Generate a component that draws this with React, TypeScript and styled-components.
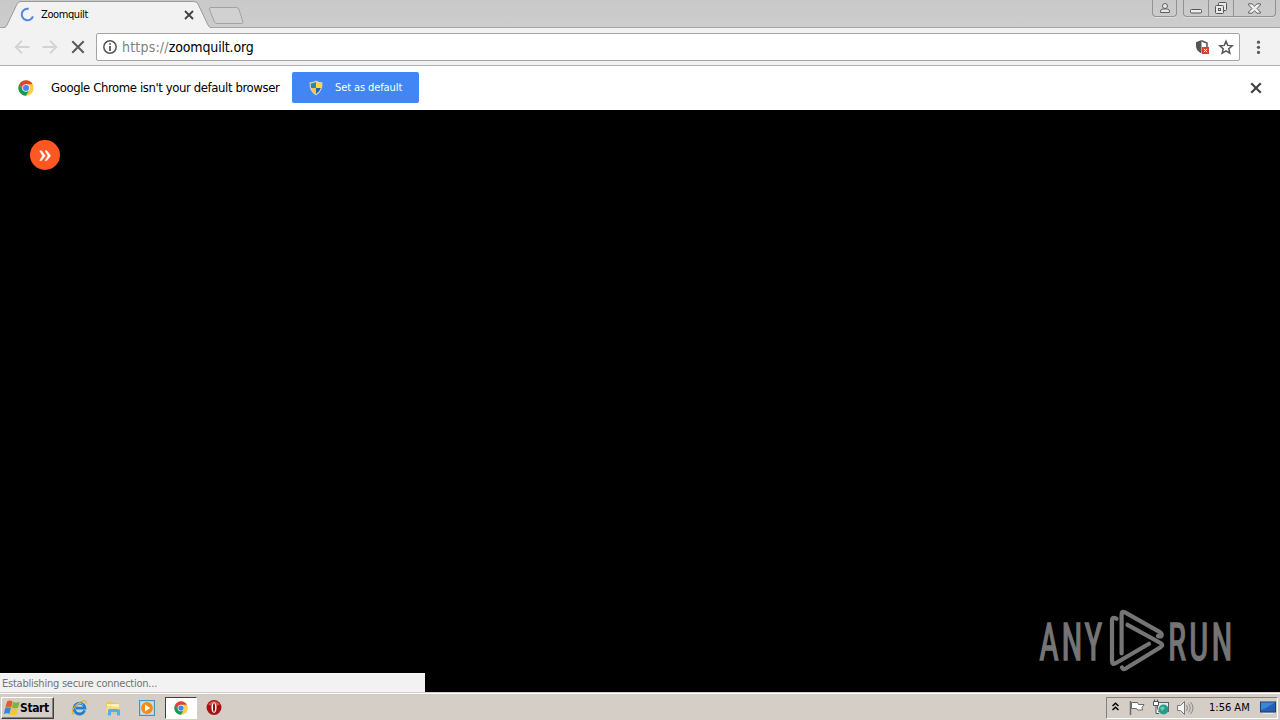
import React from "react";
import styled, { createGlobalStyle } from "styled-components";

const GlobalStyle = createGlobalStyle`
  * { box-sizing: border-box; }
  html, body { margin: 0; padding: 0; overflow: hidden; }
  body { font-family: "DejaVu Sans Condensed", "DejaVu Sans", sans-serif; font-stretch: condensed; }
  svg { display: block; flex: none; }
`;

const Screen = styled.div`
  width: 1280px;
  height: 720px;
  display: flex;
  flex-direction: column;
  background: #000;
`;

const Label = styled.span<{ $size: number; $spacing?: number; $color?: string; $weight?: number }>`
  font-size: ${(p) => p.$size}px;
  letter-spacing: ${(p) => p.$spacing ?? 0}px;
  color: ${(p) => p.$color ?? "#000"};
  font-weight: ${(p) => p.$weight ?? 400};
  line-height: 16px;
  white-space: nowrap;
`;

const TabStrip = styled.header`
  height: 28px;
  flex: none;
  display: flex;
  align-items: flex-start;
  background: linear-gradient(#c9c9c9, #cdcdcd);
  box-shadow: inset 0 -1px #a5a5a5;
`;

const Tab = styled.div`
  position: relative;
  width: 212px;
  height: 28px;
  margin-left: 2px;
  display: flex;
  align-items: center;
  padding: 1px 20px 0 18px;
`;

const TabShape = styled.svg`
  position: absolute;
  left: 0;
  top: 0;
`;

const NewTabShape = styled.svg`
  overflow: visible;
`;

const TabContent = styled.div`
  position: relative;
  flex: 1;
  display: flex;
  align-items: center;
  gap: 6px;
`;

const Spacer = styled.div`
  flex: 1;
`;

const WindowButtons = styled.div<{ $gap: number }>`
  height: 17px;
  display: flex;
  margin-right: ${(p) => p.$gap}px;
  border: 1px solid #929292;
  border-top: 0;
  border-radius: 0 0 4px 4px;
  box-shadow: 0 1px #dedede;
`;

const WindowButton = styled.div<{ $width: number }>`
  width: ${(p) => p.$width}px;
  display: flex;
  align-items: center;
  justify-content: center;
  & + & { border-left: 1px solid #929292; }
`;

const Toolbar = styled.div`
  height: 38px;
  flex: none;
  display: flex;
  align-items: center;
  padding: 0 12px 0 12px;
  background: #f2f2f2;
  border-bottom: 1px solid #b1b1b1;
`;

const NavButtons = styled.div`
  width: 84px;
  display: flex;
  gap: 8px;
`;

const AddressBar = styled.div`
  width: 1144px;
  height: 28px;
  display: flex;
  align-items: center;
  padding: 0 4px 0 5px;
  background: #fff;
  border: 1px solid #a5a5a5;
  border-radius: 2px;
  gap: 4px;
`;

const PageActions = styled.div`
  display: flex;
  align-items: center;
  gap: 7px;
`;

const InfoBar = styled.div`
  height: 44px;
  flex: none;
  display: flex;
  align-items: center;
  padding: 0 18px;
  background: #fff;
`;

const InfoText = styled.div`
  width: 241px;
  margin-left: 17px;
  display: flex;
`;

const DefaultButton = styled.button`
  width: 127px;
  height: 31px;
  display: flex;
  align-items: center;
  gap: 12px;
  padding: 0 0 0 17px;
  margin-top: -1px;
  border: 0;
  border-radius: 2px;
  background: #4285f4;
  font-family: inherit;
`;

const Page = styled.main`
  position: relative;
  flex: 1;
  background: #000;
`;

const MenuBadge = styled.div`
  position: absolute;
  left: 30px;
  top: 30px;
  width: 30px;
  height: 30px;
  border-radius: 50%;
  background: #ff5722;
  display: flex;
  align-items: center;
  justify-content: center;
`;

const Watermark = styled.svg`
  position: absolute;
  left: 1030px;
  top: 490px;
  overflow: visible;
`;

const StatusBubble = styled.div`
  position: absolute;
  left: 0;
  bottom: 0;
  width: 425px;
  height: 19px;
  padding: 2px 2px 0;
  background: #f2f2f2;
  border-top: 1px solid #fafafa;
  display: flex;
`;

const Taskbar = styled.footer`
  height: 28px;
  flex: none;
  display: flex;
  align-items: center;
  padding: 2px 2px 0 1px;
  background: #d5cec7;
  border-top: 1px solid #d4d0c8;
  box-shadow: inset 0 1px #fff;
`;

const StartButton = styled.div`
  width: 53px;
  height: 22px;
  display: flex;
  align-items: center;
  padding-left: 2px;
  border: 1px solid;
  border-color: #fff #404040 #404040 #fff;
  box-shadow: inset -1px -1px #858079;
`;

const QuickLaunch = styled.div`
  display: flex;
  align-items: center;
  margin-left: 9px;
`;

const LaunchItem = styled.div<{ $active?: boolean }>`
  width: ${(p) => (p.$active ? 32 : 33.5)}px;
  height: 22px;
  margin: ${(p) => (p.$active ? "0 1px" : "0")};
  display: flex;
  align-items: center;
  justify-content: center;
  border: ${(p) => (p.$active ? "1px solid" : "0")};
  border-color: #404040 #fff #fff #404040;
  background: ${(p) => (p.$active ? "#fff" : "transparent")};
`;

const Tray = styled.div`
  width: 172px;
  height: 22px;
  display: flex;
  align-items: center;
  padding-left: 5px;
  border: 1px solid;
  border-color: #858079 #fff #fff #858079;
`;

const TrayItem = styled.div<{ $width: number }>`
  width: ${(p) => p.$width}px;
  display: flex;
  align-items: center;
`;

const Cross = ({ size, width, color = "#414141" }: { size: number; width: number; color?: string }) => (
  <svg width={size} height={size} viewBox="0 0 10 10">
    <path d="M1 1l8 8M9 1L1 9" stroke={color} strokeWidth={width} />
  </svg>
);

const Arrow = ({ flip }: { flip?: boolean }) => (
  <svg width="20" height="20" viewBox="0 0 20 20">
    <path
      d="M17.5 10H4M10 3.7L3.7 10l6.3 6.3"
      fill="none"
      stroke="#d3d3d3"
      strokeWidth="1.9"
      transform={flip ? "matrix(-1 0 0 1 20 0)" : undefined}
    />
  </svg>
);

const ChromeIcon = ({ size }: { size: number }) => (
  <svg width={size} height={size} viewBox="0 0 48 48">
    <circle cx="24" cy="24" r="23" fill="#ffcd40" />
    <path d="M4.1 12.5A23 23 0 0 1 43.9 12.5H24L14 30Z" fill="#db4437" />
    <path d="M4.1 12.5A23 23 0 0 0 24 47l10-17.3L24 34.5 14 30Z" fill="#0f9d58" />
    <circle cx="24" cy="24" r="11.5" fill="#f1f1f1" />
    <circle cx="24" cy="24" r="9" fill="#4285f4" />
  </svg>
);

const UacShield = () => (
  <svg width="14" height="16" viewBox="0 0 14 16">
    <path d="M7 .5Q10 2.5 13.5 2.2 14 11.5 7 15.5 0 11.5.5 2.2 4 2.5 7 .5Z" fill="#d9d3ad" />
    <path d="M7 2Q4.5 3.5 1.8 3.4 1.6 6 2.2 8H7Z" fill="#2f7fc4" />
    <path d="M7 2Q9.5 3.5 12.2 3.4 12.4 6 11.8 8H7Z" fill="#ffd63e" />
    <path d="M2.2 8H7v6Q3.4 11.8 2.2 8Z" fill="#f8c72f" />
    <path d="M11.8 8H7v6q3.6-2.2 4.8-6Z" fill="#2464a8" />
  </svg>
);

const WindowsFlag = () => (
  <svg width="16" height="16" viewBox="0 0 16 16">
    <path d="M3 1.4Q5.8-.2 8.7 1.4L7.2 7.4Q4.2 6 1.4 7.5Z" fill="#e95b25" />
    <path d="M9.2 1.7Q12 3.4 15.8 1.8L14.2 7.8Q10.8 9.3 7.7 7.7Z" fill="#78b83d" />
    <path d="M1.2 8Q4 6.6 7 8L5.5 14Q2.7 12.5-.2 14.1Z" fill="#3f86d2" />
    <path d="M7.5 8.3Q10.6 9.9 14 8.4L12.4 14.4Q9.2 16 6 14.3Z" fill="#f9c52c" />
  </svg>
);

const IeIcon = () => (
  <svg width="17" height="17" viewBox="0 0 17 17">
    <path d="M13.6 11.4A5.4 5.4 0 1 1 13.9 9.2H5" fill="none" stroke="#1f7fd0" strokeWidth="2.8" />
    <path d="M5 6.4A4.6 4.6 0 0 1 12 5.6" fill="none" stroke="#74c8f5" strokeWidth="1" />
    <path d="M2.6 15.4C-1 14 3 6.5 9 3.2c4-2.4 7-2 6 1.4" fill="none" stroke="#e7af25" strokeWidth="1.2" />
  </svg>
);

const FolderIcon = () => (
  <svg width="16" height="16" viewBox="0 0 16 16">
    <path d="M1 2.5L6 1l1 1.5 7 .5v11H1Z" fill="#e9c75d" />
    <path d="M2 4h12v4H2Z" fill="#fff2b0" />
    <path d="M1.5 6l12.5 1v6H1Z" fill="#f5dc83" />
    <path d="M3 15.5V10.5Q3 9 5 9h7q3 0 3 1.5v5h-3v-3.2H6v3.2Z" fill="#58afdc" />
  </svg>
);

const MediaIcon = () => (
  <svg width="16" height="16" viewBox="0 0 16 16">
    <rect x=".5" y=".5" width="15" height="15" fill="#a8d5f1" stroke="#4b91bd" />
    <rect x="2" y="2" width="12" height="12" fill="#c3e2f5" />
    <circle cx="8" cy="8" r="5.9" fill="#f58a18" />
    <path d="M6 4.5L11.2 8 6 11.5Z" fill="#fff" />
  </svg>
);

const OperaIcon = () => (
  <svg width="16" height="17" viewBox="0 0 17 17">
    <circle cx="8.5" cy="8.5" r="7.9" fill="#a81217" />
    <path d="M2.3 5.5A7 7 0 0 1 14.7 5.5Q9 7.5 2.3 5.5Z" fill="#d6504d" />
    <ellipse cx="8.5" cy="8.5" rx="2.7" ry="5.6" fill="#fff" />
    <ellipse cx="8.5" cy="8.5" rx="1.1" ry="4.7" fill="#8c0f14" />
  </svg>
);

const AnyRunMark = () => (
  <Watermark width="210" height="80" viewBox="0 0 210 80" fill="none" stroke="#757575">
    <g fill="#757575" strokeWidth="1.5" fontFamily="Roboto, sans-serif" fontSize="52">
      <text transform="translate(9.3 59.5) scale(.65 1)" letterSpacing="4">ANY</text>
      <text transform="translate(138 59.5) scale(.65 1)" letterSpacing="5">RUN</text>
    </g>
    <g strokeWidth="4.2" strokeLinecap="round" strokeLinejoin="round">
      <path d="M91.6 53.5V14Q91.6 10.5 95 12.4L129.5 31.8Q132.8 33.8 131.4 36Q130 37 128 36" />
      <path d="M86.5 18.8Q82 16 82 21V60.5Q82 65.5 86 63L119 43.8" />
      <path d="M97.5 24.8L130.5 43Q134 45 130.5 47.2L96.5 68Q93.5 70.5 92 67.5" />
    </g>
  </Watermark>
);

export default function App() {
  return (
    <>
      <GlobalStyle />
      <Screen>
        <TabStrip>
          <Tab>
            <TabShape width="212" height="28" viewBox="0 0 212 28">
              <path d="M0 28Q4 28 5 25L15 4Q16.3 1.5 19 1.5H191.5Q195 1.5 196 4L206 25Q207 28 211 28" fill="#f2f2f2" stroke="#999" />
            </TabShape>
            <TabContent>
              <svg width="15" height="15" viewBox="0 0 15 15">
                <path d="M8.7 1.8A5.8 5.8 0 1 0 13 9.4" fill="none" stroke="#5285dc" strokeWidth="2" />
              </svg>
              <Label $size={11} $spacing={-0.4}>Zoomquilt</Label>
              <Spacer />
              <Cross size={10} width={1.8} />
            </TabContent>
          </Tab>
          <NewTabShape width="36" height="28" viewBox="0 0 36 28">
            <path d="M-3 7.5H22.5Q24 7.5 24.8 9L28.8 21.5Q29.4 23.5 27.5 23.5H3Q1.2 23.5.4 21.8L-4.6 9.2Q-5 7.5-3 7.5Z" fill="#d1d1d1" stroke="#a1a1a1" />
          </NewTabShape>
          <Spacer />
          <WindowButtons $gap={6}>
            <WindowButton $width={23}>
              <svg width="12" height="12" viewBox="0 0 12 12" fill="#e8e8e8" stroke="#606060">
                <path d="M1.5 10.5V9Q1.5 7.5 3.8 7h4.4q2.3.5 2.3 2v1.5Z" />
                <circle cx="6" cy="4" r="2.5" />
              </svg>
            </WindowButton>
          </WindowButtons>
          <WindowButtons $gap={4}>
            <WindowButton $width={24}>
              <svg width="12" height="12" viewBox="0 0 12 12"><rect x=".5" y="7.5" width="11" height="3.5" rx="1" fill="#eee" stroke="#555" /></svg>
            </WindowButton>
            <WindowButton $width={25}>
              <svg width="14" height="14" viewBox="0 0 14 14" fill="#e8e8e8" stroke="#555">
                <rect x="4.5" y="1.5" width="8" height="8" rx="1" />
                <rect x="1.5" y="4.5" width="8" height="8" rx="1" />
                <rect x="4.5" y="7.5" width="2" height="2" />
              </svg>
            </WindowButton>
            <WindowButton $width={42}>
              <svg width="13" height="11" viewBox="0 0 13 11">
                <path d="M.6.8H4L6.5 3.2 9 .8h3.4V2L9 5.5 12.4 9v1.2H9L6.5 7.8 4 10.2H.6V9L4 5.5.6 2Z" fill="#eee" stroke="#606060" />
              </svg>
            </WindowButton>
          </WindowButtons>
        </TabStrip>
        <Toolbar>
          <NavButtons>
            <Arrow />
            <Arrow flip />
            <svg width="20" height="20" viewBox="0 0 20 20">
              <path d="M4.3 4.3l11.4 11.4M15.7 4.3L4.3 15.7" stroke="#595959" strokeWidth="2" />
            </svg>
          </NavButtons>
          <AddressBar>
            <svg width="16" height="16" viewBox="0 0 16 16">
              <circle cx="8" cy="8" r="6.2" fill="none" stroke="#555" strokeWidth="1.5" />
              <path d="M8 4.2v1.6M8 7v5" stroke="#555" strokeWidth="1.8" />
            </svg>
            <Label $size={14} $spacing={-0.15}><Label as="span" $size={14} $spacing={0.2} $color="#808080">https://</Label>zoomquilt.org</Label>
            <Spacer />
            <PageActions>
              <svg width="16" height="18" viewBox="0 0 16 18">
                <path d="M7.5 2L2 4.2V8q0 4.5 5.5 7.5Z" fill="#555" />
                <path d="M7.5 2.8L13 5v4" fill="none" stroke="#555" strokeWidth="1.5" />
                <rect x="8" y="9" width="7" height="7" fill="#d83e36" />
                <path d="M9.9 10.9l3.2 3.2m0-3.2l-3.2 3.2" stroke="#fff" />
              </svg>
              <svg width="18" height="18" viewBox="0 0 18 18">
                <path d="M9 3.2l1.7 4.2 4.5.4-3.4 2.9 1 4.4L9 12.8l-3.8 2.3 1-4.4-3.4-2.9 4.5-.4Z" fill="none" stroke="#555" strokeWidth="1.5" />
              </svg>
            </PageActions>
          </AddressBar>
          <Spacer />
          <svg width="20" height="20" viewBox="0 0 20 20" fill="#595959">
            <circle cx="10.5" cy="5.2" r="1.6" /><circle cx="10.5" cy="10.3" r="1.6" /><circle cx="10.5" cy="15.4" r="1.6" />
          </svg>
        </Toolbar>
        <InfoBar>
          <ChromeIcon size={16} />
          <InfoText><Label $size={13} $spacing={-0.4}>Google Chrome isn't your default browser</Label></InfoText>
          <DefaultButton>
            <UacShield />
            <Label $size={11} $spacing={-0.1} $color="#fff">Set as default</Label>
          </DefaultButton>
          <Spacer />
          <Cross size={12} width={1.8} />
        </InfoBar>
        <Page>
          <MenuBadge>
            <svg width="14" height="14" viewBox="0 0 14 14">
              <path d="M1.8 2.8h1.6L7.2 7.8l-3.8 4.7H1.8l2.8-4.7ZM7.2 2.8h1.6l3.8 5-3.8 4.7H7.2l2.8-4.7Z" fill="#fff" stroke="#fff" strokeWidth=".6" />
            </svg>
          </MenuBadge>
          <AnyRunMark />
          <StatusBubble><Label $size={11} $spacing={-0.24} $color="#737373">Establishing secure connection...</Label></StatusBubble>
        </Page>
        <Taskbar>
          <StartButton><WindowsFlag /><Label $size={12} $weight={700} $spacing={-0.4}>Start</Label></StartButton>
          <QuickLaunch>
            <LaunchItem><IeIcon /></LaunchItem>
            <LaunchItem><FolderIcon /></LaunchItem>
            <LaunchItem><MediaIcon /></LaunchItem>
            <LaunchItem $active><ChromeIcon size={14} /></LaunchItem>
            <LaunchItem><OperaIcon /></LaunchItem>
          </QuickLaunch>
          <Spacer />
          <Tray>
            <TrayItem $width={16}>
              <svg width="7" height="12" viewBox="0 0 7 12"><path d="M.5 4l3-2.8 3 2.8M.5 8l3-2.8 3 2.8" fill="none" stroke="#000" strokeWidth="1.5" /></svg>
            </TrayItem>
            <TrayItem $width={24}>
              <svg width="18" height="16" viewBox="0 0 18 16" fill="#fff" stroke="#6d6b68">
                <path d="M3.5 2.5h6l1 2h5.5l-2 3 .5 2.5H9.5l-1-1.5h-5Z" /><path d="M2.5 1v14" strokeWidth="1.5" />
              </svg>
            </TrayItem>
            <TrayItem $width={24}>
              <svg width="18" height="17" viewBox="0 0 18 17">
                <rect x="5.5" y="3.5" width="11" height="9" fill="#d9eef5" stroke="#56646c" />
                <path d="M1.5 2.5h5v4h-5ZM2.5.5v2M5.5.5v2M4 6.5v8h3" fill="#fff" stroke="#555" />
                <circle cx="11.5" cy="10.5" r="5" fill="#269b8b" />
                <path d="M8 9q3-3 5 0l-3 3Z" fill="#75cf91" />
              </svg>
            </TrayItem>
            <TrayItem $width={33}>
              <svg width="18" height="16" viewBox="0 0 18 16">
                <path d="M1.5 5.5h3l4-4v13l-4-4h-3Z" fill="#f5f5f5" stroke="#777" />
                <path d="M10.5 5q2 3 0 6M12.5 3.5q3.5 4.5 0 9M14.5 2q5 6 0 12" fill="none" stroke="#888" />
              </svg>
            </TrayItem>
            <TrayItem $width={51}><Label $size={11} $spacing={0}>1:56 AM</Label></TrayItem>
            <svg width="16" height="14" viewBox="0 0 16 14">
              <rect x=".5" y="1" width="15" height="10" fill="#245fb5" stroke="#173d76" />
              <path d="M1 1.5h14L6 7 1 9Z" fill="#3b86d8" />
              <path d="M3 12.5h10" stroke="#dceeff" />
            </svg>
          </Tray>
        </Taskbar>
      </Screen>
    </>
  );
}
